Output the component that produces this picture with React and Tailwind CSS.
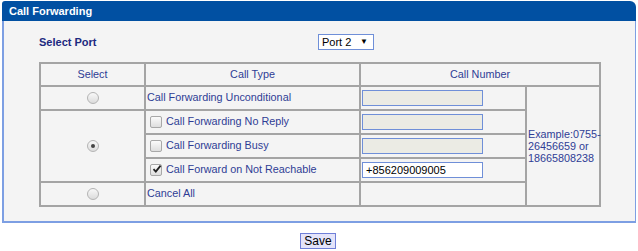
import React from "react";

const font = { fontFamily: '"Liberation Sans", Arial, sans-serif' };

function Radio({ checked }) {
  return (
    <span className="inline-flex h-[12px] w-[12px] items-center justify-center rounded-full border border-[#b4b4b4] bg-gradient-to-b from-[#f8f8f8] to-[#dcdcdc]">
      {checked && <span className="h-[4px] w-[4px] rounded-full bg-[#444]" />}
    </span>
  );
}

function Check({ checked }) {
  return (
    <span className="relative inline-flex h-[12px] w-[12px] shrink-0 items-center justify-center rounded-[2px] border border-[#a8a8a8] bg-gradient-to-b from-[#fbfbfb] to-[#dedede]">
      {checked && (
        <svg width="10" height="10" viewBox="0 0 10 10" className="absolute -top-[1px] left-[1px]">
          <path d="M1.5 5.2 L3.8 7.6 L8.6 1.6" fill="none" stroke="#222" strokeWidth="1.8" />
        </svg>
      )}
    </span>
  );
}

function NumInput({ value, disabled }) {
  return (
    <div
      className={`h-[16px] w-[121px] border border-[#6f8fd8] px-[3px] text-[11px] leading-[14px] text-black ${
        disabled ? "bg-[#ebebe4]" : "bg-white"
      }`}
    >
      {value}
    </div>
  );
}

const cell = "border-2 border-[#a4a4a4] p-0 align-middle";

export default function App() {
  return (
    <div className="h-[251px] w-[638px] bg-white pt-[1px]" style={font}>
      <div className="ml-[2px] w-[634px]">
        <div className="flex h-[20px] items-center rounded-tl-[3px] rounded-tr-[6px] bg-[#0150a2] pl-[7px] text-[11px] font-bold text-white">
          Call Forwarding
        </div>
        <div className="h-[202px] border-b-2 border-l-2 border-r border-[#7d9fe3] bg-[#f4f4f4] pt-[13px]">
          <div className="ml-[35px] grid w-[561px] grid-cols-[279px_1fr] items-center">
            <div className="text-[11px] font-bold text-[#1c2a80]">Select Port</div>
            <div>
              <div className="flex h-[16px] w-[56px] items-center justify-between border border-[#6f8fd8] bg-white pl-[3px] pr-[5px] text-[11px] text-black">
                <span>Port 2</span>
                <span className="text-[8px]">▼</span>
              </div>
            </div>
          </div>
          <table className="ml-[35px] mt-[11px] w-[560px] table-fixed border-collapse text-[10.8px] text-[#2f3d94]">
            <colgroup>
              <col className="w-[105px]" />
              <col className="w-[215px]" />
              <col className="w-[166px]" />
              <col className="w-[74px]" />
            </colgroup>
            <tbody>
              <tr className="h-[23px]">
                <td className={`${cell} text-center`}>Select</td>
                <td className={`${cell} text-center`}>Call Type</td>
                <td className={`${cell} text-center`} colSpan={2}>Call Number</td>
              </tr>
              <tr className="h-[24px]">
                <td className={`${cell} text-center`}><div className="flex justify-center"><Radio /></div></td>
                <td className={`${cell} pl-[1px]`}>Call Forwarding Unconditional</td>
                <td className={`${cell} pl-[1px]`}><NumInput disabled /></td>
                <td className={`${cell} pl-[1px] leading-[12px]`} rowSpan={5}>
                  Example:0755-<br />26456659 or<br />18665808238
                </td>
              </tr>
              <tr className="h-[24px]">
                <td className={cell} rowSpan={3}><div className="flex justify-center"><Radio checked /></div></td>
                <td className={`${cell} pl-[4px]`}>
                  <div className="flex items-center gap-[4px]"><Check />Call Forwarding No Reply</div>
                </td>
                <td className={`${cell} pl-[1px]`}><NumInput disabled /></td>
              </tr>
              <tr className="h-[24px]">
                <td className={`${cell} pl-[4px]`}>
                  <div className="flex items-center gap-[4px]"><Check />Call Forwarding Busy</div>
                </td>
                <td className={`${cell} pl-[1px]`}><NumInput disabled /></td>
              </tr>
              <tr className="h-[24px]">
                <td className={`${cell} pl-[4px]`}>
                  <div className="flex items-center gap-[4px]"><Check checked />Call Forward on Not Reachable</div>
                </td>
                <td className={`${cell} pl-[1px]`}><NumInput value="+856209009005" /></td>
              </tr>
              <tr className="h-[24px]">
                <td className={cell}><div className="flex justify-center"><Radio /></div></td>
                <td className={`${cell} pl-[1px]`}>Cancel All</td>
                <td className={cell}></td>
              </tr>
            </tbody>
          </table>
        </div>
        <div className="flex justify-center pt-[10px] pr-[2px]">
          <div className="flex h-[16px] w-[36px] items-center justify-center border border-[#6f7fd8] bg-[#e4e4fa] text-[12px] text-black">
            Save
          </div>
        </div>
      </div>
    </div>
  );
}
